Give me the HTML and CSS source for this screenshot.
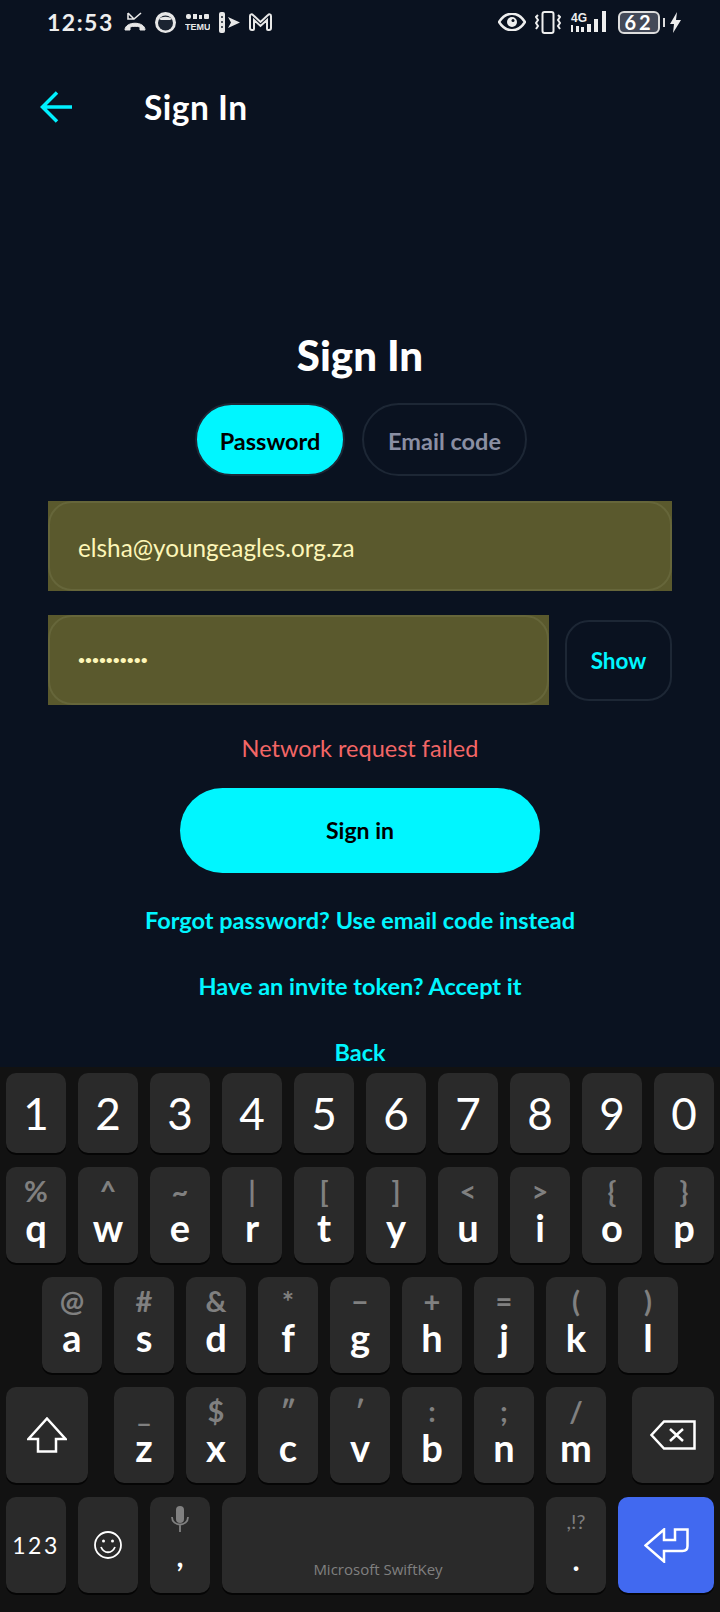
FILE: index.html
```html
<!DOCTYPE html>
<html lang="en">
<head>
    <meta charset="UTF-8">
    <meta name="viewport" content="width=device-width, initial-scale=1.0">
    <title>Sign In</title>
    <link rel="stylesheet" href="styles.css">
</head>
<body>
    <div class="app">
        <div class="status">
            <div class="status-left">
                <span class="time">12:53</span>
                <svg class="ic" width="22" height="20" viewBox="0 0 22 20" fill="none" stroke="#e8e8e8" stroke-width="1.600"><path d="M4 1v6h6M4 1l6 6 7-6"/><path d="M1 18c0-9 20-9 20 0h-5v-3c-3-1-7-1-10 0v3z" fill="#e8e8e8" stroke-width="1"/></svg>
                <svg class="ic" width="21" height="21" viewBox="0 0 21 21"><circle cx="10.500" cy="10.500" r="10.500" fill="#e8e8e8"/><circle cx="10.500" cy="11" r="7.500" fill="#1b2431"/><path d="M4 7c3-3 10-3 13 0l-2 1H6z" fill="#e8e8e8"/></svg>
                <svg class="ic" width="25" height="20" viewBox="0 0 25 20" fill="#e8e8e8"><rect x="1" y="2" width="5" height="5" rx="2"/><rect x="8" y="2" width="4" height="5"/><rect x="14" y="3" width="3" height="4"/><rect x="19" y="2" width="5" height="5" rx="1"/><text x="0" y="18" class="temu">TEMU</text></svg>
                <svg class="ic" width="21" height="21" viewBox="0 0 21 21" fill="#e8e8e8"><rect x="0" y="0" width="6" height="21" rx="2"/><path d="M9 5l12 5.500-12 5.500 3-5.500z"/><circle cx="3" cy="5" r="1" fill="#1b2431"/><circle cx="3" cy="10" r="1" fill="#1b2431"/><circle cx="3" cy="15" r="1" fill="#1b2431"/></svg>
                <svg class="ic" width="23" height="18" viewBox="0 0 23 18" fill="none" stroke="#e8e8e8" stroke-width="2"><path d="M1 3c0-2 2-2 3-1l7.500 7 7.500-7c1-1 3-1 3 1v12q0 2-2 2h-1q-1 0-1-1V7l-6.500 6L5 7v9q0 1-1 1H3q-2 0-2-2z"/></svg>
            </div>
            <div class="status-right">
                <svg class="ic" width="28" height="18" viewBox="0 0 28 18" fill="none"><path d="M1 9c7-11 19-11 26 0-7 11-19 11-26 0z" stroke="#eee" stroke-width="2.500"/><circle cx="14" cy="9" r="5" fill="#eee"/><circle cx="15" cy="7.500" r="1.500" fill="#0b1320"/></svg>
                <svg class="ic" width="26" height="23" viewBox="0 0 26 23" fill="none" stroke="#eee" stroke-width="2"><rect x="7.500" y="1" width="11" height="21" rx="2"/><path d="M3 4l-2 2 2 3-2 3 2 3-2 3M23 4l2 2-2 3 2 3-2 3 2 3"/></svg>
                <svg class="ic" width="39" height="24" viewBox="0 0 39 24" fill="#eee"><text x="1" y="12" class="net">4G</text><rect x="1" y="15" width="2" height="7"/><rect x="6" y="16" width="3" height="6"/><rect x="11" y="17" width="3" height="5"/><rect x="17" y="14" width="4" height="8"/><rect x="24" y="9" width="4" height="13"/><rect x="32" y="1" width="4" height="21"/></svg>
                <div class="battery-wrap">
                    <span class="battery">62</span>
                    <span class="nub"></span>
                </div>
                <svg class="ic bolt" width="11" height="21" viewBox="0 0 11 21" fill="#eee"><path d="M7 0L0 12h4l-1 9 8-13H6z"/></svg>
            </div>
        </div>

        <div class="header">
            <svg class="back-arrow" width="32" height="32" viewBox="0 0 32 32" fill="none" stroke="#00f0ff" stroke-width="3.500"><path d="M32 16H3M17 1.500L2.500 16 17 30.500"/></svg>
            <div class="header-title">Sign In</div>
        </div>

        <div class="form">
            <h1 class="title">Sign In</h1>
            <div class="tabs">
                <div class="tab active">Password</div>
                <div class="tab">Email code</div>
            </div>
            <div class="field">
                <div class="field-inner">elsha@youngeagles.org.za</div>
            </div>
            <div class="pass-row">
                <div class="field pass">
                    <div class="field-inner dots">&bull;&bull;&bull;&bull;&bull;&bull;&bull;&bull;&bull;&bull;</div>
                </div>
                <div class="show">Show</div>
            </div>
            <div class="error">Network request failed</div>
            <div class="submit">Sign in</div>
            <div class="link first">Forgot password? Use email code instead</div>
            <div class="link">Have an invite token? Accept it</div>
            <div class="link">Back</div>
        </div>
    </div>

    <div class="keyboard">
        <div class="row">
            <div class="key num">1</div>
            <div class="key num">2</div>
            <div class="key num">3</div>
            <div class="key num">4</div>
            <div class="key num">5</div>
            <div class="key num">6</div>
            <div class="key num">7</div>
            <div class="key num">8</div>
            <div class="key num">9</div>
            <div class="key num">0</div>
        </div>
        <div class="row">
            <div class="key"><span class="sub">%</span><span class="main">q</span></div>
            <div class="key"><span class="sub">^</span><span class="main">w</span></div>
            <div class="key"><span class="sub">~</span><span class="main">e</span></div>
            <div class="key"><span class="sub">|</span><span class="main">r</span></div>
            <div class="key"><span class="sub">[</span><span class="main">t</span></div>
            <div class="key"><span class="sub">]</span><span class="main">y</span></div>
            <div class="key"><span class="sub">&lt;</span><span class="main">u</span></div>
            <div class="key"><span class="sub">&gt;</span><span class="main">i</span></div>
            <div class="key"><span class="sub">{</span><span class="main">o</span></div>
            <div class="key"><span class="sub">}</span><span class="main">p</span></div>
        </div>
        <div class="row home">
            <div class="key"><span class="sub">@</span><span class="main">a</span></div>
            <div class="key"><span class="sub">#</span><span class="main">s</span></div>
            <div class="key"><span class="sub">&amp;</span><span class="main">d</span></div>
            <div class="key"><span class="sub">*</span><span class="main">f</span></div>
            <div class="key"><span class="sub">&minus;</span><span class="main">g</span></div>
            <div class="key"><span class="sub">+</span><span class="main">h</span></div>
            <div class="key"><span class="sub">=</span><span class="main">j</span></div>
            <div class="key"><span class="sub">(</span><span class="main">k</span></div>
            <div class="key"><span class="sub">)</span><span class="main">l</span></div>
        </div>
        <div class="row">
            <div class="key wide shift">
                <svg width="40" height="36" viewBox="0 0 40 36" fill="none" stroke="#fff" stroke-width="2.500"><path d="M20 1.500L38.500 22H29v12.500H11V22H1.500z"/></svg>
            </div>
            <div class="key"><span class="sub">_</span><span class="main">z</span></div>
            <div class="key"><span class="sub">$</span><span class="main">x</span></div>
            <div class="key"><span class="sub">&Prime;</span><span class="main">c</span></div>
            <div class="key"><span class="sub">&prime;</span><span class="main">v</span></div>
            <div class="key"><span class="sub">:</span><span class="main">b</span></div>
            <div class="key"><span class="sub">;</span><span class="main">n</span></div>
            <div class="key"><span class="sub">/</span><span class="main">m</span></div>
            <div class="key wide del">
                <svg width="46" height="30" viewBox="0 0 46 30" fill="none" stroke="#fff" stroke-width="2.500"><path d="M14 1.500h30.500v27H14L1.500 15zM20 9l13 12M33 9L20 21"/></svg>
            </div>
        </div>
        <div class="row">
            <div class="key center label">123</div>
            <div class="key center">
                <svg width="28" height="28" viewBox="0 0 28 28" fill="none" stroke="#fff" stroke-width="1.800"><circle cx="14" cy="14" r="13"/><path d="M7 16c3 7 11 7 14 0"/><circle cx="9.500" cy="10" r="1.500" fill="#fff" stroke="none"/><circle cx="18.500" cy="10" r="1.500" fill="#fff" stroke="none"/></svg>
            </div>
            <div class="key">
                <svg class="mic" width="18" height="26" viewBox="0 0 18 26" fill="none" stroke="#808080" stroke-width="1.800"><rect x="5" y="0" width="8" height="17" rx="4" fill="#808080" stroke="none"/><path d="M1 11c0 10 16 10 16 0M9 18v8"/></svg>
                <span class="main punct">,</span>
            </div>
            <div class="key space">Microsoft SwiftKey</div>
            <div class="key"><span class="sub small">,!?</span><span class="main punct">.</span></div>
            <div class="key enter center">
                <svg width="45" height="35" viewBox="0 0 45 35" fill="none" stroke="#fff" stroke-width="2.500"><path d="M1.500 17.500L20 1.500V12h11V1.500h12.500V18q0 5-5 5H20v10.500z"/></svg>
            </div>
        </div>
    </div>
</body>
</html>
```

FILE: styles.css
```css
*{
    margin: 0;
    padding: 0;
    box-sizing: border-box;
}
body{
    width: 720px;
    height: 1612px;
    overflow: hidden;
    background-color: #121212;
    font-family: "Lato", "Noto Sans", sans-serif;
}
.app{
    height: 1067px;
    overflow: hidden;
    background-color: #0a1220;
}

/* status bar */
.status{
    height: 44px;
    display: flex;
    justify-content: space-between;
    align-items: center;
    padding: 0 39px 0 47px;
}
.status-left,.status-right{
    display: flex;
    align-items: center;
    gap: 9px;
}
.ic{
    display: block;
}
.time{
    width: 67px;
    color: #eee;
    font-size: 23px;
    font-weight: 700;
    letter-spacing: 1.500px;
    white-space: nowrap;
    margin-right: 1px;
}
.temu{
    font-size: 9px;
    font-family: "Liberation Sans", sans-serif;
    font-weight: 700;
}
.net{
    font-size: 12px;
    font-family: "Liberation Sans", sans-serif;
    font-weight: 700;
}
.battery-wrap{
    display: flex;
    align-items: center;
    gap: 3px;
}
.battery{
    width: 42px;
    height: 23px;
    border: 2px solid #ddd;
    border-radius: 6px;
    background-color: #434958;
    color: #fff;
    font-size: 20px;
    font-weight: 700;
    line-height: 19px;
    letter-spacing: 3px;
    text-align: center;
}
.nub{
    width: 2px;
    height: 9px;
    background-color: #ddd;
}
.bolt{
    margin-left: -4px;
}

/* header */
.header{
    height: 126px;
    display: flex;
    align-items: center;
    padding-left: 40px;
    gap: 72px;
}
.header-title{
    color: #fff;
    font-size: 33.500px;
    font-weight: 700;
    letter-spacing: .5px;
}

/* form */
.form{
    display: flex;
    flex-direction: column;
    align-items: center;
    padding: 0 48px;
}
.title{
    margin-top: 155px;
    color: #fff;
    font-size: 42px;
    font-weight: 900;
    line-height: 60px;
}
.tabs{
    display: flex;
    gap: 17px;
    margin-top: 18px;
    margin-left: 2px;
}
.tab{
    width: 165px;
    height: 73px;
    border: 2px solid #1d2735;
    border-radius: 37px;
    color: #8a8fa3;
    font-size: 23.500px;
    font-weight: 700;
    line-height: 73px;
    text-align: center;
}
.tab.active{
    width: 150px;
    background-color: #00f6ff;
    color: #000;
}
.field{
    width: 100%;
    height: 90px;
    margin-top: 25px;
    background-color: #5a592d;
}
.field-inner{
    height: 100%;
    border: 2px solid #66663a;
    border-radius: 24px;
    padding: 2px 0 0 28px;
    color: #fdf6b8;
    font-size: 24.300px;
    line-height: 86px;
}
.field-inner.dots{
    font-size: 12px;
    font-weight: 700;
    padding-top: 0;
}
.pass-row{
    width: 100%;
    display: flex;
    align-items: center;
    gap: 16px;
    margin-top: 24px;
}
.field.pass{
    width: 501px;
    margin-top: 0;
    flex-shrink: 0;
}
.show{
    flex: 1;
    height: 81px;
    border: 2px solid #1d2735;
    border-radius: 24px;
    color: #00f6ff;
    font-size: 22.500px;
    font-weight: 700;
    line-height: 77px;
    text-align: center;
}
.error{
    margin-top: 28px;
    color: #f36666;
    font-size: 23.500px;
    line-height: 30px;
}
.submit{
    width: 360px;
    height: 85px;
    margin-top: 25px;
    border-radius: 43px;
    background-color: #00f6ff;
    color: #000;
    font-size: 23px;
    font-weight: 700;
    line-height: 85px;
    text-align: center;
}
.link{
    margin-top: 36px;
    color: #00f6ff;
    font-size: 23.500px;
    font-weight: 700;
    line-height: 30px;
    white-space: nowrap;
}
.link.first{
    margin-top: 32px;
}

/* keyboard */
.keyboard{
    height: 545px;
    padding: 6px 6px 0;
    display: flex;
    flex-direction: column;
    gap: 14px;
    background-color: #121212;
}
.row{
    display: flex;
    gap: 12px;
}
.row.home{
    padding-left: 36px;
}
.key{
    width: 60px;
    height: 96px;
    display: flex;
    flex-direction: column;
    align-items: center;
    border-radius: 10px;
    background-color: #2a2a2a;
    box-shadow: 0 2px 0 #050505;
}
.key.num{
    height: 80px;
    justify-content: center;
    color: #fff;
    font-size: 44px;
}
.key.center{
    justify-content: center;
}
.key.wide{
    width: 82px;
    justify-content: center;
}
.key.shift{
    margin-right: 14px;
}
.key.del{
    margin-left: 14px;
}
.key.label{
    color: #fff;
    font-size: 23px;
    letter-spacing: 2.500px;
}
.key.space{
    width: 312px;
    justify-content: flex-end;
    padding-bottom: 14px;
    color: #808080;
    font-family: "Open Sans", sans-serif;
    font-size: 15px;
    line-height: 20px;
}
.key.enter{
    width: 96px;
    background-color: #4169f0;
}
.sub{
    height: 36px;
    margin-top: 6px;
    color: #808080;
    font-size: 29px;
    font-weight: 700;
    line-height: 36px;
}
.sub.small{
    font-size: 20px;
    font-weight: 400;
}
.main{
    height: 36px;
    color: #fff;
    font-size: 38px;
    font-weight: 700;
    line-height: 36px;
}
.mic{
    margin-top: 9px;
}
.main.punct{
    margin-top: 5px;
    font-size: 30px;
}
.sub.small + .main.punct{
    margin-top: 2px;
}
```
